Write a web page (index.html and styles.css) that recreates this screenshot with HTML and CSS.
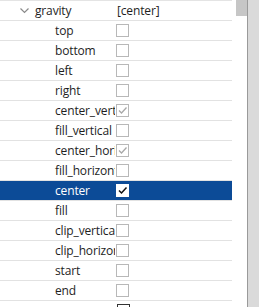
FILE: index.html
```html
<!DOCTYPE html>
<html lang="en">
<head>
  <meta charset="UTF-8">
  <title>Attributes</title>
  <link rel="stylesheet" href="styles.css">
</head>
<body>
  <div class="panel">
    <div class="list">
      <div class="row parent">
        <div class="name">
          <svg class="chevron" width="9" height="6" viewBox="0 0 9 6"><path d="M0.5 0.5 L4.5 4.5 L8.5 0.5" fill="none" stroke="#8a8a8a" stroke-width="1.2"/></svg>
          <span>gravity</span>
        </div>
        <div class="value">[center]</div>
      </div>
      <div class="row"><div class="name child">top</div><div class="value"><span class="box"></span></div></div>
      <div class="row"><div class="name child">bottom</div><div class="value"><span class="box"></span></div></div>
      <div class="row"><div class="name child">left</div><div class="value"><span class="box"></span></div></div>
      <div class="row"><div class="name child">right</div><div class="value"><span class="box"></span></div></div>
      <div class="row"><div class="name child">center_vertical</div><div class="value"><span class="box checked"><svg viewBox="0 0 11 11"><path d="M2 5.5 L4.5 8 L9.5 2.5" fill="none" stroke="currentColor" stroke-width="1.3"/></svg></span></div></div>
      <div class="row"><div class="name child">fill_vertical</div><div class="value"><span class="box"></span></div></div>
      <div class="row"><div class="name child">center_horizontal</div><div class="value"><span class="box checked"><svg viewBox="0 0 11 11"><path d="M2 5.5 L4.5 8 L9.5 2.5" fill="none" stroke="currentColor" stroke-width="1.3"/></svg></span></div></div>
      <div class="row"><div class="name child">fill_horizontal</div><div class="value"><span class="box"></span></div></div>
      <div class="row selected"><div class="name child">center</div><div class="value"><span class="box checked"><svg viewBox="0 0 11 11"><path d="M2 5.5 L4.5 8 L9.5 2.5" fill="none" stroke="currentColor" stroke-width="1.5"/></svg></span></div></div>
      <div class="row"><div class="name child">fill</div><div class="value"><span class="box"></span></div></div>
      <div class="row"><div class="name child">clip_vertical</div><div class="value"><span class="box"></span></div></div>
      <div class="row"><div class="name child">clip_horizontal</div><div class="value"><span class="box"></span></div></div>
      <div class="row"><div class="name child">start</div><div class="value"><span class="box"></span></div></div>
      <div class="row"><div class="name child">end</div><div class="value"><span class="box"></span></div></div>
      <div class="row parent last"><div class="name sub">baselineAligned</div><div class="value"><span class="box dark"></span></div></div>
    </div>
    <div class="scroll"><div class="thumb"></div></div>
    <div class="edge"></div>
  </div>
</body>
</html>
```

FILE: styles.css
```css
* {
  margin: 0;
  padding: 0;
  box-sizing: border-box;
}

body {
  font-family: "Open Sans", "Noto Sans", sans-serif;
  font-size: 12px;
  letter-spacing: -0.15px;
  color: #1e1e1e;
  background: #fff;
  overflow: hidden;
}

.panel {
  display: flex;
  height: 307px;
  overflow: hidden;
}

.list {
  width: 232px;
  border-top: 1px solid #e4e4e4;
}

.row {
  display: flex;
  height: 20px;
  border-bottom: 1px solid #e2e2e2;
  align-items: center;
}

.row.last {
  align-items: flex-start;
  padding-top: 3px;
}

.name {
  width: 115px;
  white-space: nowrap;
  overflow: hidden;
  display: flex;
  align-items: center;
}

.parent .name {
  padding-left: 20px;
}

.chevron {
  margin-right: 6px;
}

.child {
  padding-left: 55px;
}

.parent .sub {
  padding-left: 35px;
}

.value {
  flex: 1;
  display: flex;
  align-items: center;
  padding-left: 1px;
}

.parent .value {
  padding-left: 2px;
}

.box {
  width: 13px;
  height: 13px;
  border: 1px solid #b8b8b8;
  background: #fff;
  color: #a8a8a8;
  display: flex;
  align-items: center;
  justify-content: center;
}

.box svg {
  width: 11px;
  height: 11px;
}

.box.dark {
  border-color: #333;
}

.selected {
  background: #0c4b97;
  color: #fff;
}

.selected .box {
  border-color: #fff;
  color: #111;
}

.scroll {
  width: 11px;
  margin-left: 4px;
}

.thumb {
  height: 16px;
  background: #c6c6c6;
}

.edge {
  flex: 1;
  border-left: 1px solid #9a9a9a;
  background: #dadada;
}
```
